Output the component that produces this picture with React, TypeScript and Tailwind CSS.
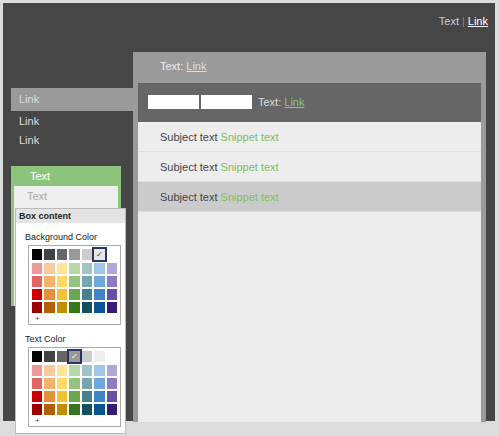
import React from "react";

const rows = [
  ["#ea9999", "#f9cb9c", "#ffe599", "#b6d7a8", "#a2c4c9", "#9fc5e8", "#b4a7d6"],
  ["#e06666", "#f6b26b", "#ffd966", "#93c47d", "#76a5af", "#6fa8dc", "#8e7cc3"],
  ["#cc0000", "#e69138", "#f1c232", "#6aa84f", "#45818e", "#3d85c6", "#674ea7"],
  ["#990000", "#b45f06", "#bf9000", "#38761d", "#134f5c", "#0b5394", "#351c75"],
];

function Palette({ first, sel, checkColor }: { first: string[]; sel: number; checkColor: string }) {
  const all = [first, ...rows];
  return (
    <div className="border border-[#aaa] bg-white px-[3px] pt-[3px] w-[93px] h-[80px]">
      {all.map((r, i) => (
        <div key={i} className={"flex gap-[2px] " + (i === 0 ? "mb-[3px]" : "mb-[2px]")}>
          {r.map((c, j) => (
            <div
              key={j}
              className={
                "w-[11px] h-[11px] flex items-center justify-center text-[8px] leading-none " +
                (i === 0 && j === sel ? "outline outline-2 outline-[#2a3466]" : "")
              }
              style={{ background: c, color: checkColor }}
            >
              {i === 0 && j === sel ? "✓" : ""}
            </div>
          ))}
        </div>
      ))}
      <div className="text-[8px] text-[#555] pl-[3px] leading-none mt-[1px]">+</div>
    </div>
  );
}

export default function App() {
  return (
    <div className="w-[499px] h-[436px] bg-[#dcdcdc] relative overflow-hidden text-[11px]" style={{ fontFamily: '"Liberation Sans", Arial, sans-serif' }}>
      <div className="absolute left-[3px] top-[3px] w-[492px] h-[418px] bg-[#464646]">
        <div className="flex justify-end pr-[7px] pt-[10px] text-[#ccc]">
          Text <span className="mx-[3px] text-[#888]">|</span>
          <span className="underline text-white">Link</span>
        </div>
        <div className="flex mt-[22px]">
          <div className="w-[130px] pt-[36px] pl-[8px]">
            <div className="bg-[#9a9a9a] text-[#ddd] h-[23px] leading-[23px] pl-[8px]">Link</div>
            <div className="text-[#ddd] pl-[8px] mt-[1px] leading-[19px]">Link</div>
            <div className="text-[#ddd] pl-[8px] leading-[19px]">Link</div>
            <div className="mt-[16px] bg-[#8dc47b] w-[110px] h-[140px] px-[3px]">
              <div className="h-[20px] leading-[20px] pl-[16px] text-white">Text</div>
              <div className="bg-[#eee] h-[120px] pl-[13px] pt-[2px] text-[#aaa]">Text</div>
            </div>
          </div>
          <div className="w-[353px] h-[370px] bg-[#9a9a9a] px-[5px]">
            <div className="h-[31px] leading-[29px] pl-[22px] text-[#eee]">
              Text: <span className="underline text-[#ddd]">Link</span>
            </div>
            <div className="bg-[#666] h-[39px] flex items-center pl-[10px] gap-[2px] text-[#ddd]">
              <div className="w-[51px] h-[14px] bg-white"></div>
              <div className="w-[51px] h-[14px] bg-white"></div>
              <span className="ml-[4px]">
                Text: <span className="underline text-[#8dc47b]">Link</span>
              </span>
            </div>
            <div className="bg-[#ededed] h-[300px] text-[#444]">
              {[0, 1, 2].map((i) => (
                <div
                  key={i}
                  className={"h-[30px] leading-[30px] pl-[22px] border-b border-[#ddd] " + (i === 2 ? "bg-[#cbcbcb]" : "")}
                >
                  Subject text <span className="text-[#7cbf5e]">Snippet text</span>
                </div>
              ))}
            </div>
          </div>
        </div>
      </div>
      <div className="absolute left-[15px] top-[208px] w-[111px] h-[226px] bg-white border border-[#bbb] text-[#222]">
        <div className="bg-[#e4e4e4] font-bold h-[14px] leading-[14px] pl-[3px] text-[9px]">Box content</div>
        <div className="pl-[9px] pt-[9px] text-[9px] leading-[11px]">Background Color</div>
        <div className="pl-[12px] pt-[2px]">
          <Palette first={["#000", "#434343", "#666", "#999", "#ccc", "#e6e6e6", "#fff"]} sel={5} checkColor="#333" />
        </div>
        <div className="pl-[9px] pt-[9px] text-[9px] leading-[11px]">Text Color</div>
        <div className="pl-[12px] pt-[2px]">
          <Palette first={["#000", "#434343", "#666", "#999", "#ccc", "#eee", "#fff"]} sel={3} checkColor="#fff" />
        </div>
      </div>
    </div>
  );
}
